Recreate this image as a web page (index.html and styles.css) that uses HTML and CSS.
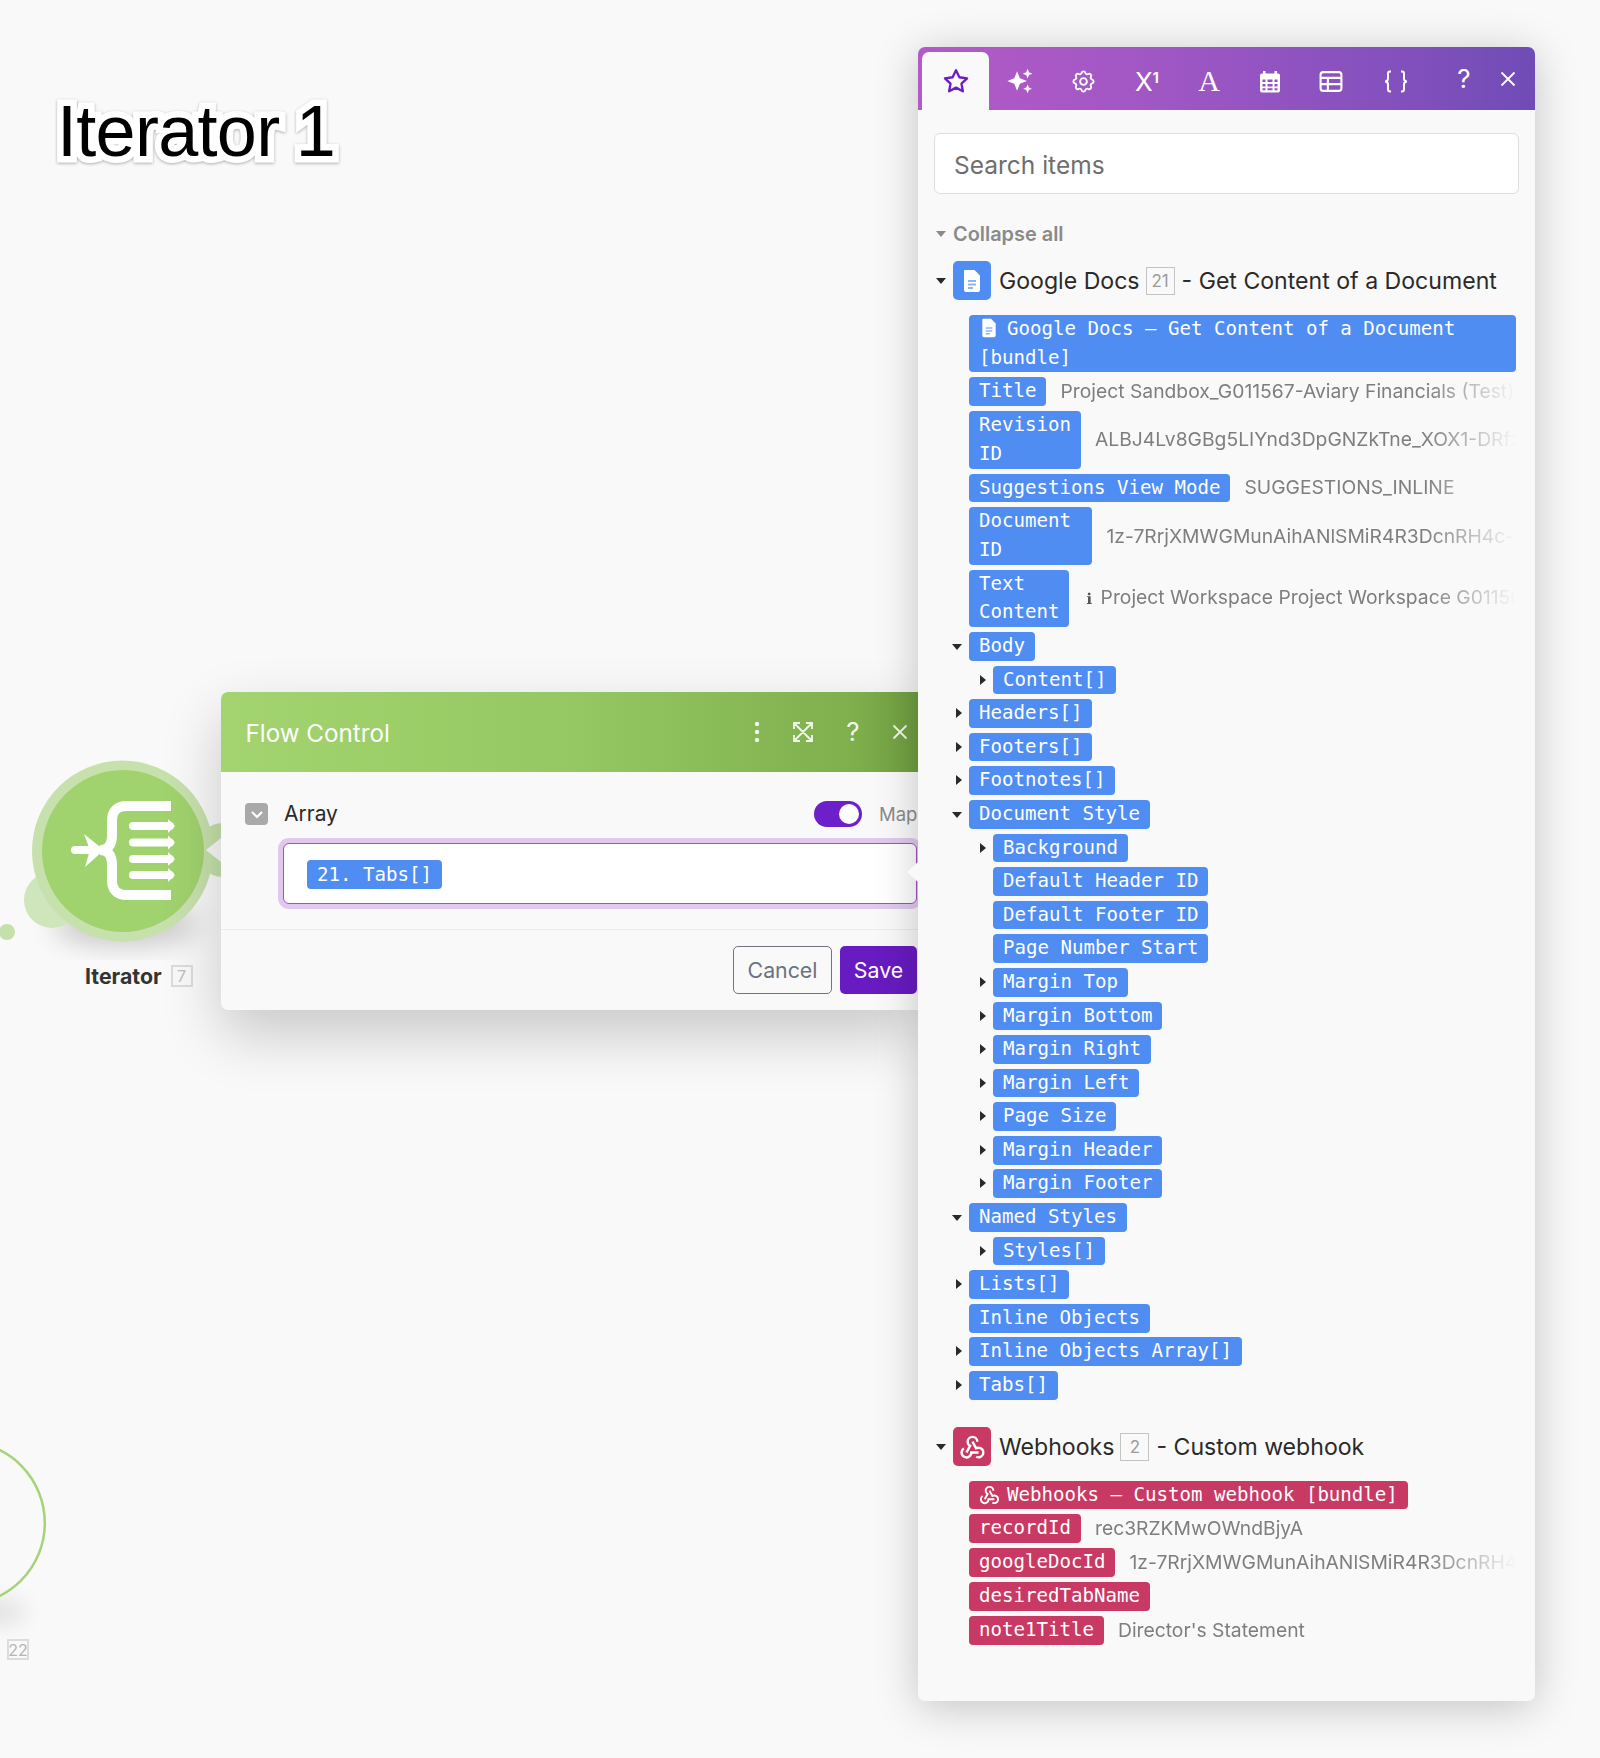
FILE: index.html
```html
<!DOCTYPE html>
<html lang="en">
<head>
<meta charset="utf-8">
<title>Iterator 1</title>
<link rel="stylesheet" href="styles.css">
</head>
<body>
<main class="canvas">
  <h1 class="scene-title">Iterator 1</h1>

  <svg class="node-art" viewBox="0 740 240 220" width="240" height="220" aria-hidden="true">
    <defs><filter id="blur" x="-50%" y="-100%" width="200%" height="300%"><feGaussianBlur stdDeviation="14"/></filter></defs>
    <ellipse cx="125" cy="925" rx="72" ry="20" fill="#000" opacity=".2" filter="url(#blur)"/>
    <circle cx="7" cy="932" r="8" fill="#c5e0aa"/>
    <circle cx="52" cy="900" r="28" fill="#cfe5bb"/>
    <circle cx="223" cy="850" r="27" fill="#c5e0aa"/>
    <circle cx="122.500" cy="851" r="90.500" fill="#c7e1ad"/>
    <circle cx="123" cy="851" r="81" fill="#a0d26d"/>
    <polygon points="206,850 226,834 226,866" fill="#f9f9f9"/>
    <g fill="none" stroke="#fff">
      <path stroke-width="10" d="M171 806H127Q112 806 112 821V835Q112 850 100 850Q112 850 112 865V880Q112 895 127 895H171"/>
      <path stroke-width="8" stroke-linecap="round" d="M75 850H98M133 826H170M133 842.500H170M133 859H170M133 875H170"/>
    </g>
    <g fill="#fff">
      <polygon points="84,834 104,850 85,867 90,850"/>
      <polygon points="168,819 175,826 168,833"/>
      <polygon points="168,835.500 175,842.500 168,849.500"/>
      <polygon points="168,852 175,859 168,866"/>
      <polygon points="168,868 175,875 168,882"/>
    </g>
  </svg>
  <div class="node-label"><b>Iterator</b><span class="count count-node">7</span></div>

  <svg class="node-ghost" viewBox="0 1430 60 230" width="60" height="230" aria-hidden="true">
    <defs><filter id="blur2" x="-100%" y="-100%" width="300%" height="300%"><feGaussianBlur stdDeviation="11"/></filter></defs>
    <ellipse cx="0" cy="1612" rx="26" ry="12" fill="#000" opacity=".1" filter="url(#blur2)"/>
    <circle cx="-36.700" cy="1523" r="81.500" fill="none" stroke="#a5d478" stroke-width="2.500"/>
  </svg>
  <span class="count count-ghost">22</span>

  <section class="dialog">
    <header class="dialog-head">
      <h2>Flow Control</h2>
      <div class="dialog-tools">
        <svg viewBox="0 0 24 24" width="24" height="24"><g fill="#f1f7ea"><circle cx="12" cy="4" r="2.200"/><circle cx="12" cy="12" r="2.200"/><circle cx="12" cy="20" r="2.200"/></g></svg>
        <svg viewBox="0 0 24 24" width="24" height="24" fill="none" stroke="#f1f7ea" stroke-width="1.800"><path d="M4 4l16 16M20 4L4 20M3 9V3h6M15 3h6v6M21 15v6h-6M9 21H3v-6"/></svg>
        <span class="tool-q">?</span>
        <svg viewBox="0 0 24 24" width="24" height="24" fill="none" stroke="#f1f7ea" stroke-width="1.800"><path d="M5.500 5.500l13 13M18.500 5.500l-13 13"/></svg>
      </div>
    </header>
    <div class="dialog-body">
      <div class="field-head">
        <span class="check"><svg viewBox="0 0 24 24" width="20" height="20" fill="none" stroke="#fff" stroke-width="2.600"><path d="M6 9.500l6 6 6-6"/></svg></span>
        <span class="field-name">Array</span>
        <span class="toggle"><i></i></span>
        <span class="map">Map</span>
      </div>
      <div class="field-input"><span class="pill">21. Tabs[]</span></div>
    </div>
    <footer class="dialog-foot">
      <button class="btn btn-ghost">Cancel</button>
      <button class="btn btn-main">Save</button>
    </footer>
  </section>

  <aside class="panel">
    <span class="panel-pointer"></span>
    <nav class="tabs">
      <span class="tab tab-on"><svg viewBox="0 0 24 24" width="28" height="28" fill="none" stroke="#6d1cc4" stroke-width="2" stroke-linejoin="round"><path d="M12 2.800l2.900 6 6.600.9-4.800 4.600 1.200 6.500L12 17.700l-5.900 3.100 1.200-6.500-4.800-4.600 6.600-.9z"/></svg></span>
      <span class="tab"><svg viewBox="0 0 24 24" width="28" height="28" fill="#fff"><path d="M9.500 6l2.400 6 6 2.400-6 2.400-2.400 6-2.400-6-6-2.400 6-2.400z" transform="translate(0 -2.400)"/><path d="M18.500 1.500l1.200 3 3 1.200-3 1.200-1.200 3-1.200-3-3-1.200 3-1.200z"/><path d="M18.500 15l1.100 2.600 2.600 1.100-2.600 1.100-1.100 2.700-1.100-2.700-2.600-1.100 2.600-1.100z"/></svg></span>
      <span class="tab"><svg viewBox="0 0 24 24" width="27" height="27" fill="none" stroke="#fff" stroke-width="1.700"><path d="M10.325 4.317c.426-1.756 2.924-1.756 3.350 0a1.724 1.724 0 0 0 2.573 1.066c1.543-.94 3.310.826 2.370 2.370a1.724 1.724 0 0 0 1.065 2.572c1.756.426 1.756 2.924 0 3.350a1.724 1.724 0 0 0-1.066 2.573c.94 1.543-.826 3.310-2.370 2.370a1.724 1.724 0 0 0-2.572 1.065c-.426 1.756-2.924 1.756-3.350 0a1.724 1.724 0 0 0-2.573-1.066c-1.543.94-3.310-.826-2.370-2.370a1.724 1.724 0 0 0-1.065-2.572c-1.756-.426-1.756-2.924 0-3.350a1.724 1.724 0 0 0 1.066-2.573c-.94-1.543.826-3.310 2.370-2.370 1 .608 2.296.07 2.572-1.065z"/><circle cx="12" cy="12" r="3"/></svg></span>
      <span class="tab tab-text tab-x">X<sup>1</sup></span>
      <span class="tab tab-text tab-a">A</span>
      <span class="tab"><svg viewBox="0 0 24 24" width="24" height="27" fill="#fff"><path fill-rule="evenodd" d="M5 1.500h2.500V4h9V1.500H19V4h1a2 2 0 0 1 2 2v15a2 2 0 0 1-2 2H4a2 2 0 0 1-2-2V6a2 2 0 0 1 2-2h1zM4.500 10v2.500h3V10zm5 0v2.500h5V10zm7 0v2.500h3V10zM4.500 14.500V17h3v-2.500zm5 0V17h5v-2.500zm7 0V17h3v-2.500zM4.500 18.700v2h3v-2zm5 0v2h5v-2zm7 0v2h3v-2z"/></svg></span>
      <span class="tab"><svg viewBox="0 0 24 24" width="28" height="25" fill="none" stroke="#fff" stroke-width="2"><rect x="2" y="3" width="20" height="18" rx="2.500"/><path d="M2 8.500h20M2 14.500h20M9 8.500V21"/></svg></span>
      <span class="tab"><svg viewBox="0 0 28 24" width="28" height="25" fill="none" stroke="#fff" stroke-width="2"><path d="M9 2H8a2 2 0 0 0-2 2v5a3 3 0 0 1-3 3 3 3 0 0 1 3 3v5a2 2 0 0 0 2 2h1M19 2h1a2 2 0 0 1 2 2v5a3 3 0 0 0 3 3 3 3 0 0 0-3 3v5a2 2 0 0 1-2 2h-1"/></svg></span>
      <span class="tab tab-text tab-q">?</span>
      <span class="tab tab-close"><svg viewBox="0 0 20 20" width="20" height="20" fill="none" stroke="#fff" stroke-width="1.800"><path d="M3.500 3.500l13 13M16.500 3.500l-13 13"/></svg></span>
    </nav>

    <div class="panel-body">
      <div class="search">Search items</div>
      <div class="collapse"><span class="caret caret-gray"></span>Collapse all</div>

      <div class="group-head">
        <span class="caret caret-dark"></span>
        <span class="app app-blue"><svg viewBox="0 0 24 24" width="24" height="24"><path fill="#fff" d="M5 1h9.500L20 6.500V21a2 2 0 0 1-2 2H6a2 2 0 0 1-2-2V2a1 1 0 0 1 1-1z"/><path stroke="#8db4f7" stroke-width="2" d="M8 12h8M8 15.500h8M8 19h5"/></svg></span>
        <span class="group-title">Google Docs</span><span class="count count-group">21</span><span class="group-title">- Get Content of a Document</span>
      </div>

      <div class="tree">
        <div class="row row-bundle"><span class="pill pill-block"><svg class="pill-icon pill-icon-doc" viewBox="0 0 24 24" width="20" height="20"><path fill="#fff" d="M5 1h9.500L20 6.500V21a2 2 0 0 1-2 2H6a2 2 0 0 1-2-2V2a1 1 0 0 1 1-1z"/><path stroke="#8db4f7" stroke-width="1.800" d="M8 12h8M8 15.500h8M8 19h5"/></svg>Google Docs – Get Content of a Document<br>[bundle]</span></div>
        <div class="row"><span class="pill">Title</span><span class="value">Project Sandbox_G011567-Aviary Financials (Test)</span></div>
        <div class="row"><span class="pill">Revision<br>ID</span><span class="value">ALBJ4Lv8GBg5LIYnd3DpGNZkTne_XOX1-DRfzKq2mH</span></div>
        <div class="row"><span class="pill">Suggestions View Mode</span><span class="value">SUGGESTIONS_INLINE</span></div>
        <div class="row"><span class="pill">Document&nbsp;<br>ID</span><span class="value">1z-7RrjXMWGMunAihANlSMiR4R3DcnRH4c-SdT0</span></div>
        <div class="row"><span class="pill">Text<br>Content</span><span class="value value-info"><i>ℹ</i> Project Workspace Project Workspace G011567</span></div>
        <div class="row open"><span class="pill">Body</span></div>
        <div class="row closed sub"><span class="pill">Content[]</span></div>
        <div class="row closed"><span class="pill">Headers[]</span></div>
        <div class="row closed"><span class="pill">Footers[]</span></div>
        <div class="row closed"><span class="pill">Footnotes[]</span></div>
        <div class="row open"><span class="pill">Document Style</span></div>
        <div class="row closed sub"><span class="pill">Background</span></div>
        <div class="row sub"><span class="pill">Default Header ID</span></div>
        <div class="row sub"><span class="pill">Default Footer ID</span></div>
        <div class="row sub"><span class="pill">Page Number Start</span></div>
        <div class="row closed sub"><span class="pill">Margin Top</span></div>
        <div class="row closed sub"><span class="pill">Margin Bottom</span></div>
        <div class="row closed sub"><span class="pill">Margin Right</span></div>
        <div class="row closed sub"><span class="pill">Margin Left</span></div>
        <div class="row closed sub"><span class="pill">Page Size</span></div>
        <div class="row closed sub"><span class="pill">Margin Header</span></div>
        <div class="row closed sub"><span class="pill">Margin Footer</span></div>
        <div class="row open"><span class="pill">Named Styles</span></div>
        <div class="row closed sub"><span class="pill">Styles[]</span></div>
        <div class="row closed"><span class="pill">Lists[]</span></div>
        <div class="row"><span class="pill">Inline Objects</span></div>
        <div class="row closed"><span class="pill">Inline Objects Array[]</span></div>
        <div class="row closed"><span class="pill">Tabs[]</span></div>
      </div>

      <div class="group-head group-second">
        <span class="caret caret-dark"></span>
        <span class="app app-red"><svg viewBox="0 0 24 24" width="29" height="29" fill="none" stroke="#fff" stroke-width="2"><path d="M4.876 13.610a4 4 0 1 0 6.124 3.390h6"/><path d="M15.066 20.502a4 4 0 1 0 1.934-7.502c-.706 0-1.424.179-2 .5l-3-5.500"/><path d="M16 8a4 4 0 1 0-8 0c0 1.506.77 2.818 2 3.500l-3 5.500"/></svg></span>
        <span class="group-title">Webhooks</span><span class="count count-group">2</span><span class="group-title">- Custom webhook</span>
      </div>

      <div class="tree tree-red">
        <div class="row row-bundle"><span class="pill"><svg class="pill-icon pill-icon-hook" viewBox="0 0 24 24" width="23" height="23" fill="none" stroke="#fff" stroke-width="2"><path d="M4.876 13.610a4 4 0 1 0 6.124 3.390h6"/><path d="M15.066 20.502a4 4 0 1 0 1.934-7.502c-.706 0-1.424.179-2 .5l-3-5.500"/><path d="M16 8a4 4 0 1 0-8 0c0 1.506.77 2.818 2 3.500l-3 5.500"/></svg>Webhooks – Custom webhook [bundle]</span></div>
        <div class="row"><span class="pill">recordId</span><span class="value">rec3RZKMwOWndBjyA</span></div>
        <div class="row"><span class="pill">googleDocId</span><span class="value">1z-7RrjXMWGMunAihANlSMiR4R3DcnRH4c-SdT0</span></div>
        <div class="row"><span class="pill">desiredTabName</span></div>
        <div class="row"><span class="pill">note1Title</span><span class="value">Director's Statement</span></div>
      </div>
    </div>
  </aside>
</main>
</body>
</html>
```

FILE: styles.css
```css
* { box-sizing: border-box; }
html, body { margin: 0; height: 100%; }
body {
  background: #f9f9f9;
  font-family: Inter, "Liberation Sans", sans-serif;
  color: #2a2a2a;
  overflow: hidden;
}
.canvas { position: relative; width: 1600px; height: 1758px; overflow: hidden; }

/* free canvas items */
.scene-title {
  position: absolute; left: 57px; top: 91px; margin: 0;
  font: 400 72px/80px "Liberation Sans", Arial, sans-serif;
  letter-spacing: -.7px;
  word-spacing: -3px;
  color: #000;
  -webkit-text-stroke: 13px #fff;
  paint-order: stroke fill;
  filter: drop-shadow(0 1.500px 1.500px rgba(0,0,0,.3));
}
.node-art { position: absolute; left: 0; top: 740px; }
.node-ghost { position: absolute; left: 0; top: 1430px; }
.node-label {
  position: absolute; left: 85px; top: 964px; display: flex; align-items: center; gap: 9px;
  font-size: 21.300px; line-height: 24px; color: #333;
}
.node-label b { font-weight: 700; }
.count {
  display: inline-flex; align-items: center; justify-content: center; flex: none;
  font-weight: 400; background: transparent;
}
.count-node { width: 22px; height: 22px; border: 2px solid #dcdcdc; color: #bdbdbd; font-size: 16px; }
.count-ghost {
  position: absolute; left: 7px; top: 1639px; width: 22px; height: 21px;
  border: 2px solid #dcdcdc; color: #b5b5b5; font-size: 16px;
}

/* dialog */
.dialog {
  position: absolute; left: 221px; top: 692px; width: 697px; height: 318px;
  display: flex; flex-direction: column;
  background: #f9f9f9;
  border-radius: 7px 0 0 7px;
  box-shadow: 0 24px 60px rgba(0,0,0,.2);
}
.dialog-head {
  height: 80px; flex: none; display: flex; align-items: center; justify-content: space-between;
  padding: 0 6px 0 24.500px;
  color: #fff;
  border-radius: 7px 0 0 0;
  background: linear-gradient(90deg, #a3d46f 0%, #95c862 50%, #80b04e 90%, #6f9e40 100%);
}
.dialog-head h2 { margin: 0; font-size: 24.200px; font-weight: 400; line-height: 30px; padding-top: 4px; }
.dialog-tools { display: grid; grid-template-columns: 62px 30px 70px 24px; align-items: center; justify-items: center; }
.tool-q { font-size: 26px; line-height: 24px; color: #f1f7ea; }

.dialog-body { padding: 29px 0 0 24px; height: 158px; flex: none; border-bottom: 1px solid #ececec; }
.field-head { display: flex; align-items: center; height: 26px; }
.check {
  width: 23px; height: 22px; border-radius: 4px; background: #a9a9a9;
  display: flex; align-items: center; justify-content: center;
}
.field-name { margin: -2px 0 0 16px; font-size: 21px; }
.toggle {
  margin-left: auto; width: 48px; height: 26px; border-radius: 13px; background: #6d1fc9;
  display: flex; align-items: center; justify-content: flex-end; padding-right: 3px;
}
.toggle i { width: 20px; height: 20px; border-radius: 50%; background: #fff; }
.map { width: 39px; margin-left: 17px; font-size: 18.500px; color: #8b8b8b; overflow: hidden; white-space: nowrap; }
.field-input {
  margin: 16px 1px 0 38px; height: 61px; padding-left: 23px;
  display: flex; align-items: center;
  background: #fff;
  border: 1px solid #a44fc8; border-radius: 6px;
  box-shadow: 0 0 0 5px #e0c8ef;
}
.field-input .pill { margin-top: 1px; line-height: 29px; }

.dialog-foot { display: flex; justify-content: flex-end; gap: 8px; padding: 16px 1px 0 0; }
.btn { height: 48px; border-radius: 5px; font: 400 21.300px Inter, "Liberation Sans", sans-serif; padding: 0; }
.btn-ghost { width: 99px; background: transparent; border: 1px solid #70757f; color: #6b7280; }
.btn-main { width: 77px; background: #681bc1; border: 0; color: #fff; }

/* panel */
.panel {
  position: absolute; left: 918px; top: 47px; width: 617px; height: 1654px;
  background: #f9f9f9; border-radius: 7px;
  box-shadow: 0 6px 44px rgba(0,0,0,.22);
}
.panel-pointer {
  position: absolute; left: -11px; top: 815px; width: 0; height: 0;
  border-style: solid; border-width: 10px 11px 10px 0;
  border-color: transparent #f9f9f9 transparent transparent;
}
.tabs {
  height: 63px; padding: 5px 0 0 4px;
  display: grid; grid-template-columns: 67px 62px 64px 64px 60px 61px 62px 68px 68px 20px;
  border-radius: 7px 7px 0 0;
  background: linear-gradient(90deg, #b45ac8 0%, #9f57c4 40%, #7d4fbb 85%, #704cb6 100%);
}
.tab { display: flex; align-items: center; justify-content: center; color: #fff; }
.tab-on { background: #f9f9f9; border-radius: 7px 7px 0 0; }
.tab-text { font-size: 25px; }
.tab-x { font-family: Inter, sans-serif; font-size: 26px; }
.tab-x sup { font-size: 14px; font-weight: 700; line-height: 0; position: relative; top: -3px; vertical-align: super; }
.tab-a { font-family: "Liberation Serif", serif; font-size: 30px; }
.tab-q { font-family: Inter, sans-serif; font-size: 26px; margin-top: -5px; }
.tab-close { margin-top: -5px; }

.panel-body { padding: 23px 16px 0 16px; }
.search {
  height: 61px; display: flex; align-items: center; padding: 2px 0 0 19px;
  background: #fff; border: 1px solid #dedede; border-radius: 6px;
  font-size: 24.500px; color: #6e6e6e;
}
.caret { width: 0; height: 0; flex: none; border-style: solid; border-width: 6px 5px 0 5px; border-color: #2a2a2a transparent transparent; }
.caret-gray { border-top-color: #8a8a8a; margin-right: 7px; }
.caret-dark { margin-right: 7px; margin-left: 2px; }
.collapse {
  display: flex; align-items: center; height: 24px; margin-top: 28px; padding-left: 2px;
  font-size: 19.900px; font-weight: 600; color: #8a8a8a;
}
.group-head { display: flex; align-items: center; height: 39px; margin-top: 15px; }
.group-second { margin-top: 27.500px; }
.app { width: 38px; height: 39px; border-radius: 5px; display: flex; align-items: center; justify-content: center; margin-right: 8px; flex: none; }
.app-blue { background: #4f8df3; }
.app-red { background: #c83a64; }
.group-title { font-size: 23.100px; white-space: nowrap; }
.count-group { width: 29px; height: 28px; border: 1px solid #c4c4c4; color: #9c9c9c; font-size: 17px; margin: 0 7px 0 6px; }

.tree { margin-top: 15px; padding: 0 3px 0 17px; --pill: #4f8df3; }
.tree-red { --pill: #c83a64; margin-top: 14.500px; }
.row { position: relative; display: flex; align-items: center; margin-bottom: 4.900px; padding-left: 18px; }
.row.sub { padding-left: 42px; }
.row.open::before, .row.closed::before { content: ""; position: absolute; width: 0; height: 0; border-style: solid; }
.row.open::before { left: 1px; top: 12px; border-width: 6px 5.500px 0; border-color: #2a2a2a transparent transparent; }
.row.closed::before { left: 5px; top: 9px; border-width: 5.500px 0 5.500px 6px; border-color: transparent transparent transparent #2a2a2a; }
.row.closed.sub::before { left: 29px; }
.pill, .tree .pill {
  flex: none;
  display: inline-block;
  padding: 0 10px;
  border-radius: 4px;
  background: var(--pill, #4f8df3);
  color: #fff;
  font: 400 19.100px/28.700px "DejaVu Sans Mono", "Liberation Mono", monospace;
  white-space: nowrap;
}
.pill-block { width: 100%; }
.pill-icon { vertical-align: -3px; }
.pill-icon-doc { margin-right: 8px; }
.pill-icon-hook { margin: 0 6px 0 -1px; vertical-align: -5px; }
.value {
  flex: 1; min-width: 0; margin-left: 14px; overflow: hidden; white-space: nowrap;
  font-size: 19.300px; line-height: 29px; color: #7e7e7e;
  -webkit-mask-image: linear-gradient(90deg, #000 calc(100% - 90px), transparent 100%);
  mask-image: linear-gradient(90deg, #000 calc(100% - 90px), transparent 100%);
}
.value-info i { font-style: normal; font-family: "DejaVu Sans", sans-serif; font-size: 15px; font-weight: 700; color: #555; margin: 0 3px 0 3px; }
```
